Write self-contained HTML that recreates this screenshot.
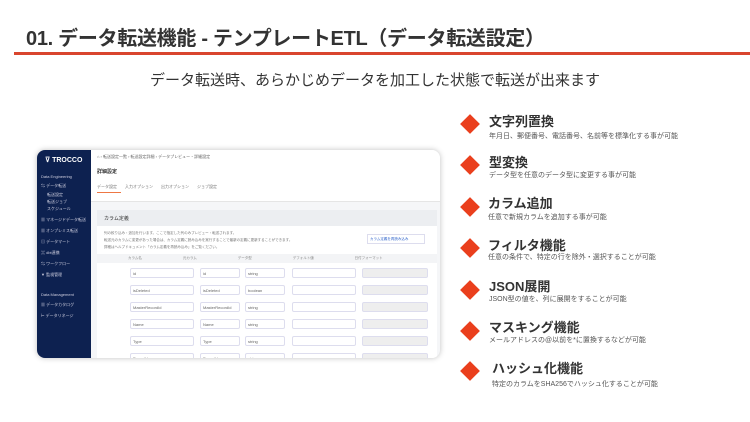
<!DOCTYPE html><html><head><meta charset="utf-8"><style>
*{margin:0;padding:0;box-sizing:border-box}
body{width:750px;height:422px;background:#fff;position:relative;overflow:hidden;font-family:"Liberation Sans","Noto Sans CJK JP",sans-serif;color:#333}
.a{position:absolute}
.t{left:26px;top:22px;font-size:20px;font-weight:bold;color:#333;white-space:nowrap;letter-spacing:-0.3px}
.line{left:14px;top:52px;width:736px;height:3px;background:#d9452e}
.sub{left:0;width:750px;top:69px;text-align:center;font-size:15px;color:#333}
.d{width:14px;height:14px;background:#ea3f1d;transform:rotate(45deg)}
.it{font-size:13px;font-weight:bold;color:#333;white-space:nowrap}
.ds{font-size:7px;color:#555;white-space:nowrap}
.shot{left:37px;top:150px;width:403px;height:208px;border-radius:8px;overflow:hidden;box-shadow:0 0 6px rgba(0,0,0,.25);background:#f5f6f8}
.side{left:0;top:0;width:54px;height:208px;background:#0d2150}
.s{font-size:4px;color:#ccd;left:4px;white-space:nowrap}
.in{height:10px;border:1px solid #dde;background:#fff;border-radius:2px;font-size:4px;color:#666;padding:2px}
</style></head><body>
<div class="a t">01. データ転送機能 - テンプレートETL（データ転送設定）</div>
<div class="a line"></div>
<div class="a sub">データ転送時、あらかじめデータを加工した状態で転送が出来ます</div>

<div class="a shot">
 <div class="a side">
  <div class="a" style="left:8px;top:6px;font-size:7px;color:#fff;font-weight:bold">⊽ TROCCO</div>
  <div class="a s" style="top:24px">Data Engineering</div>
  <div class="a s" style="top:33px">⇆ データ転送</div>
  <div class="a s" style="top:42px;left:10px">転送設定</div>
  <div class="a s" style="top:49px;left:10px">転送ジョブ</div>
  <div class="a s" style="top:56px;left:10px">スケジュール</div>
  <div class="a s" style="top:67px">▦ マネージドデータ転送</div>
  <div class="a s" style="top:78px">▦ オンプレミス転送</div>
  <div class="a s" style="top:89px">▤ データマート</div>
  <div class="a s" style="top:100px">⌘ dbt連携</div>
  <div class="a s" style="top:111px">⇆ ワークフロー</div>
  <div class="a s" style="top:122px">▼ 監視管理</div>
  <div class="a s" style="top:142px">Data Management</div>
  <div class="a s" style="top:152px">▦ データカタログ</div>
  <div class="a s" style="top:163px">⊢ データリネージ</div>
 </div>
 <div class="a" style="left:54px;top:0;width:349px;height:12px;background:#fff;font-size:4px;color:#666;padding:4px 6px">⌂ › 転送設定一覧 › 転送設定詳細 › データプレビュー・詳細設定</div>
 <div class="a" style="left:54px;top:12px;width:349px;height:40px;background:#fff;border-bottom:1px solid #e5e5e5">
  <div class="a" style="left:6px;top:6px;font-size:5px;font-weight:bold">詳細設定</div>
  <div class="a" style="left:6px;top:22px;font-size:4px;color:#777">データ設定　　入力オプション　　出力オプション　　ジョブ設定</div>
  <div class="a" style="left:6px;top:30px;width:24px;height:1px;background:#e74"></div>
 </div>
 <div class="a" style="left:60px;top:60px;width:340px;height:16px;background:#eceef1;font-size:5px;padding:5px 7px">カラム定義</div>
 <div class="a" style="left:60px;top:76px;width:340px;height:132px;background:#fff">
  <div class="a" style="left:7px;top:4px;font-size:3.5px;color:#777;line-height:7px">列の絞り込み・追加を行います。ここで指定した列のみプレビュー・転送されます。<br>転送元のカラムに変更があった場合は、カラム定義に読み込みを実行することで最新の定義に更新することができます。<br>詳細はヘルプドキュメント「カラム定義を再読み込み」をご覧ください。</div>
  <div class="a" style="left:270px;top:8px;width:58px;height:10px;border:1px solid #dde;font-size:3.5px;color:#36c;padding:2px">カラム定義を再読み込み</div>
  <div class="a" style="left:0;top:28px;width:340px;height:9px;background:#f3f4f6;font-size:3.5px;color:#888;padding:2px 31px;word-spacing:40px">カラム名 元カラム データ型 デフォルト値 日付フォーマット</div>
  <div class="a" style="top:42px;left:0;width:340px">
   <div style="position:relative;height:17px"><div class="a in" style="left:33px;width:64px">id</div><div class="a in" style="left:103px;width:40px">id</div><div class="a in" style="left:148px;width:40px">string</div><div class="a in" style="left:195px;width:64px"></div><div class="a in" style="left:265px;width:66px;background:#eee"></div></div>
   <div style="position:relative;height:17px"><div class="a in" style="left:33px;width:64px">isDeleted</div><div class="a in" style="left:103px;width:40px">isDeleted</div><div class="a in" style="left:148px;width:40px">boolean</div><div class="a in" style="left:195px;width:64px"></div><div class="a in" style="left:265px;width:66px;background:#eee"></div></div>
   <div style="position:relative;height:17px"><div class="a in" style="left:33px;width:64px">MasterRecordId</div><div class="a in" style="left:103px;width:40px">MasterRecordId</div><div class="a in" style="left:148px;width:40px">string</div><div class="a in" style="left:195px;width:64px"></div><div class="a in" style="left:265px;width:66px;background:#eee"></div></div>
   <div style="position:relative;height:17px"><div class="a in" style="left:33px;width:64px">Name</div><div class="a in" style="left:103px;width:40px">Name</div><div class="a in" style="left:148px;width:40px">string</div><div class="a in" style="left:195px;width:64px"></div><div class="a in" style="left:265px;width:66px;background:#eee"></div></div>
   <div style="position:relative;height:17px"><div class="a in" style="left:33px;width:64px">Type</div><div class="a in" style="left:103px;width:40px">Type</div><div class="a in" style="left:148px;width:40px">string</div><div class="a in" style="left:195px;width:64px"></div><div class="a in" style="left:265px;width:66px;background:#eee"></div></div>
   <div style="position:relative;height:17px"><div class="a in" style="left:33px;width:64px">ParentId</div><div class="a in" style="left:103px;width:40px">ParentId</div><div class="a in" style="left:148px;width:40px">string</div><div class="a in" style="left:195px;width:64px"></div><div class="a in" style="left:265px;width:66px;background:#eee"></div></div>
  </div>
 </div>
</div>

<div class="a d" style="left:463px;top:117px"></div><div class="a it" style="left:489px;top:111px">文字列置換</div><div class="a ds" style="left:489px;top:131px">年月日、郵便番号、電話番号、名前等を標準化する事が可能</div>
<div class="a d" style="left:463px;top:158px"></div><div class="a it" style="left:489px;top:152px">型変換</div><div class="a ds" style="left:489px;top:170px">データ型を任意のデータ型に変更する事が可能</div>
<div class="a d" style="left:463px;top:200px"></div><div class="a it" style="left:488px;top:193px">カラム追加</div><div class="a ds" style="left:488px;top:212px">任意で新規カラムを追加する事が可能</div>
<div class="a d" style="left:463px;top:241px"></div><div class="a it" style="left:488px;top:235px">フィルタ機能</div><div class="a ds" style="left:488px;top:252px">任意の条件で、特定の行を除外・選択することが可能</div>
<div class="a d" style="left:463px;top:283px"></div><div class="a it" style="left:489px;top:276px">JSON展開</div><div class="a ds" style="left:489px;top:294px">JSON型の値を、列に展開をすることが可能</div>
<div class="a d" style="left:463px;top:324px"></div><div class="a it" style="left:489px;top:317px">マスキング機能</div><div class="a ds" style="left:489px;top:335px">メールアドレスの@以前を*に置換するなどが可能</div>
<div class="a d" style="left:463px;top:364px"></div><div class="a it" style="left:492px;top:358px">ハッシュ化機能</div><div class="a ds" style="left:492px;top:379px">特定のカラムをSHA256でハッシュ化することが可能</div>
</body></html>
